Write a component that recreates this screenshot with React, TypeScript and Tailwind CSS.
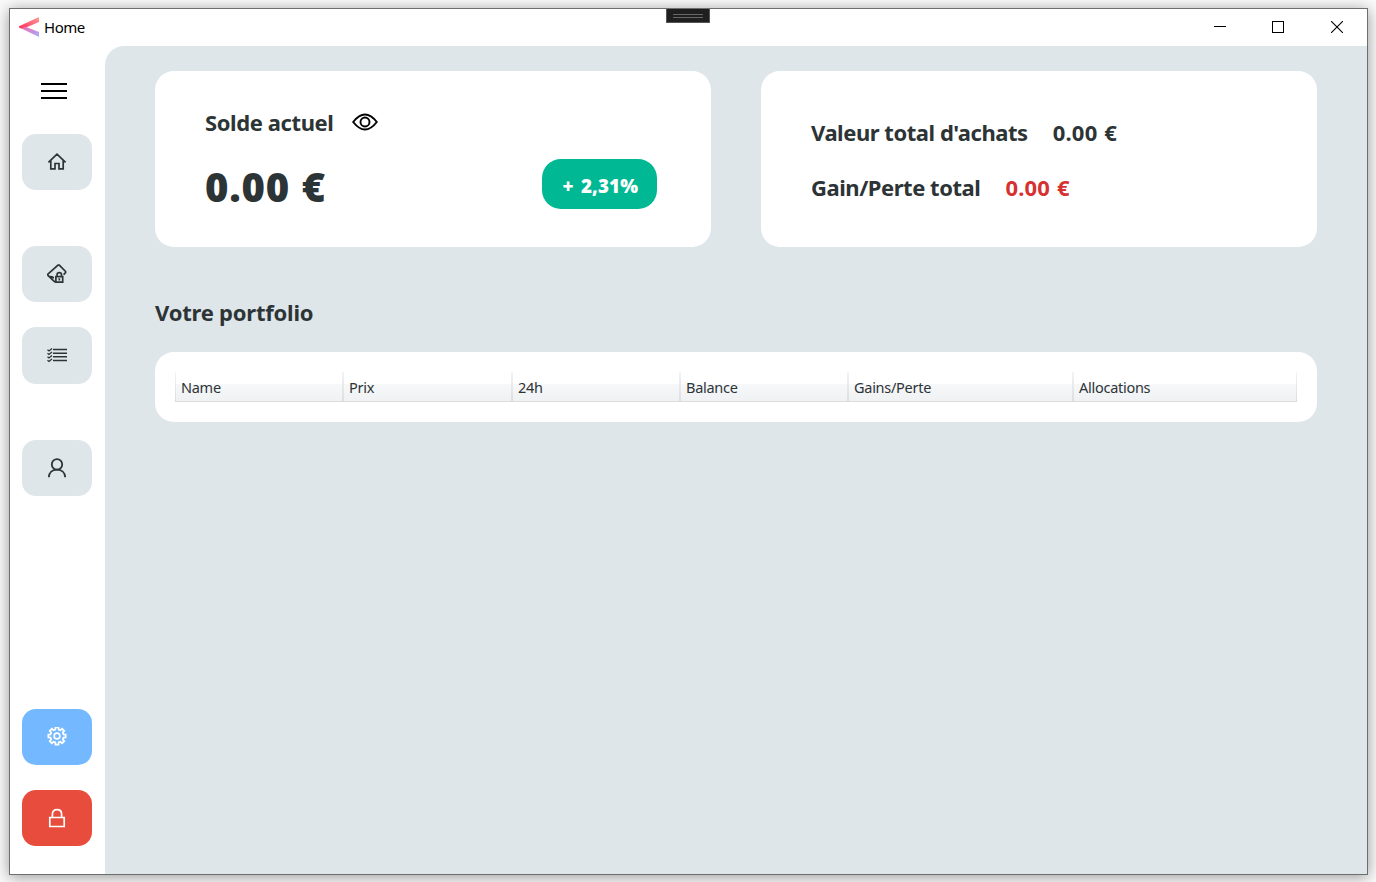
import type { ReactNode } from "react";

function Glyph({ children }: { children: ReactNode }) {
  return (
    <svg width="20" height="20" viewBox="0 0 20 20" fill="none" stroke="currentColor" strokeWidth="1.7">
      {children}
    </svg>
  );
}

function HomeIcon() {
  return (
    <Glyph>
      <path d="M1.4 10.3 10 2.2l8.600 8.100M3.800 8.500v8.300h4.200v-5.300h4v5.300h4.200V8.500" />
    </Glyph>
  );
}

function TagLockIcon() {
  return (
    <Glyph>
      <path d="M8 18.200.9 11.300v-1.200L11 1.200h1.300l6.300 6.300v1.200l-2 2M2.600 12.500l3.200.3M4.200 14.300l2.800-.9" />
      <path d="M8.900 12.700h6.800v5.500H8.900zM10.100 12.700v-2q0-2 2.200-2t2.200 2v2M12.300 14.200v2.400" />
    </Glyph>
  );
}

function ListIcon() {
  return (
    <Glyph>
      <path d="M6 4.500h14M6 8.200h14M6 11.800h14M6 15.500h14" strokeWidth="1.4" />
      <path d="m.5 4.700 1.500 1.300 3-2.600M.5 8.200 2 9.500l3-2.600M.5 11.700 2 13l3-2.600M.5 15.200 2 16.500l3-2.600" strokeWidth="1.3" />
    </Glyph>
  );
}

function UserIcon() {
  return (
    <Glyph>
      <circle cx="10" cy="6.4" r="5.2" strokeWidth="1.8" />
      <path d="M1.800 19.200c.2-4.700 3.700-7.600 8.200-7.600s8 2.900 8.200 7.600" strokeWidth="1.8" />
    </Glyph>
  );
}

function GearIcon() {
  return (
    <Glyph>
      <g transform="translate(0 -.7)">
        <path
          strokeWidth="1.8"
          d="m8.300 3.200.2-2.100h3l.2 2.100 1.700.7 1.700-1.400 2.100 2.100-1.400 1.700.7 1.700 2.100.2v3l-2.100.2-.7 1.700 1.400 1.700-2.100 2.100-1.700-1.400-1.700.7-.2 2.100h-3l-.2-2.100-1.700-.7-1.700 1.400-2.100-2.100 1.400-1.700-.7-1.700-2.100-.2v-3l2.100-.2.7-1.700-1.400-1.700 2.100-2.100 1.700 1.400z"
        />
        <circle cx="10" cy="9.700" r="2.900" strokeWidth="1.800" />
      </g>
    </Glyph>
  );
}

function LockIcon() {
  return (
    <Glyph>
      <path d="M2.800 9.500h14.400v9H2.800zM5.400 9.500V6.300q0-4.600 4.600-4.600t4.600 4.600v3.200" />
    </Glyph>
  );
}

function NavButton({ className, label, children }: { className: string; label: string; children: ReactNode }) {
  return (
    <button
      type="button"
      aria-label={label}
      className={`flex h-[56.25px] w-[70px] shrink-0 items-center justify-center rounded-[14px] ${className}`}
    >
      {children}
    </button>
  );
}

function TitleBar() {
  return (
    <header className="relative flex h-[37px] shrink-0 items-center bg-white pb-[2px]">
      <svg className="ml-[9px]" width="20" height="20" viewBox="0 0 20 20">
        <defs>
          <linearGradient id="top" x1="0" x2="1" y1="1" y2="0">
            <stop stopColor="#ff2d55" />
            <stop offset="1" stopColor="#ff9c9c" />
          </linearGradient>
          <linearGradient id="bottom" x1="0" x2="1" y1="0" y2="1">
            <stop stopColor="#f763a8" />
            <stop offset="1" stopColor="#9fb4ff" />
          </linearGradient>
        </defs>
        <path d="M0 9.200 20 0v5L7 10.500l-5 1-2-1z" fill="url(#top)" />
        <path d="M2 11.300l5-1.300L20 15v5z" fill="url(#bottom)" />
      </svg>
      <span className="ml-[5px] text-[15px] leading-5 tracking-[-0.45px] text-black">Home</span>
      <div className="absolute top-0 left-[656px] flex h-[14px] w-11 flex-col items-center justify-center gap-0.5 border border-t-0 border-[#555] bg-[#1f1f1f]">
        <i className="h-px w-[30px] bg-[#686868]" />
        <i className="h-px w-[30px] bg-[#686868]" />
      </div>
      <div className="mr-[24px] ml-auto flex items-center gap-[46px]">
        <svg width="12" height="12" viewBox="0 0 12 12" stroke="#000" shapeRendering="crispEdges">
          <path d="M0 5.5h12" />
        </svg>
        <svg width="12" height="12" viewBox="0 0 12 12" stroke="#000" fill="none" shapeRendering="crispEdges">
          <path d="M.5.5h11v11H.5z" />
        </svg>
        <svg className="ml-px" width="12" height="12" viewBox="0 0 12 12" stroke="#000" strokeWidth="1.1">
          <path d="m0 0 12 12M12 0 0 12" />
        </svg>
      </div>
    </header>
  );
}

function Sidebar() {
  return (
    <nav className="flex w-[95px] shrink-0 flex-col items-center pr-px text-[#2d3436]">
      <div className="mt-[37px] mr-[6px] flex w-[26px] flex-col gap-[5px]">
        <i className="h-0.5 bg-black" />
        <i className="h-0.5 bg-black" />
        <i className="h-0.5 bg-black" />
      </div>
      <NavButton label="Accueil" className="mt-[34.5px] bg-[#dfe6e9]">
        <HomeIcon />
      </NavButton>
      <NavButton label="Portefeuille" className="mt-[56.25px] bg-[#dfe6e9]">
        <TagLockIcon />
      </NavButton>
      <NavButton label="Liste" className="mt-[25px] bg-[#dfe6e9]">
        <ListIcon />
      </NavButton>
      <NavButton label="Profil" className="mt-[56.25px] bg-[#dfe6e9]">
        <UserIcon />
      </NavButton>
      <NavButton label="Paramètres" className="mt-auto bg-[#74b9ff] text-white">
        <GearIcon />
      </NavButton>
      <NavButton label="Verrouiller" className="mt-[25px] mb-[28px] bg-[#e74c3c] text-white">
        <LockIcon />
      </NavButton>
    </nav>
  );
}

const columns = ["Name", "Prix", "24h", "Balance", "Gains/Perte", "Allocations"];

export default function App() {
  return (
    <div className="h-[882px] w-[1376px] overflow-hidden bg-[#fafafa] pt-2 pl-[9px] font-['Noto_Sans','Open_Sans',sans-serif] text-[#2d3436]">
      <div className="flex h-[867px] w-[1359px] flex-col border border-[#6e6e6e] bg-white shadow-[0_2px_14px_rgba(0,0,0,0.4)]">
        <TitleBar />
        <div className="flex min-h-0 flex-1">
          <Sidebar />
          <main className="flex-1 rounded-tl-[19px] bg-[#dfe6e9] px-[50px] pt-[25px]">
            <div className="grid grid-cols-2 gap-[50px]">
              <section className="flex h-[176px] items-start justify-between rounded-[19px] bg-white pr-[54px] pl-[50px]">
                <div className="pt-[36px]">
                  <div className="flex items-center">
                    <h2 className="pb-px text-[22px] leading-[30px] font-bold tracking-[-0.4px]">Solde actuel</h2>
                    <svg className="mb-px ml-[18.5px]" width="27" height="18" viewBox="0 0 27 18" fill="none" stroke="#000" strokeWidth="1.9">
                      <path d="M1.200 9Q7 1.500 13 1.500T24.800 9Q19 16.500 13 16.500T1.200 9Z" />
                      <circle cx="13" cy="9" r="4.500" />
                    </svg>
                  </div>
                  <p className="mt-[22px] text-[40px] leading-[54px] font-black tracking-[0.8px] [word-spacing:0.5px]">0.00 €</p>
                </div>
                <div className="mt-[88px] flex h-[50px] w-[115.5px] items-center justify-center rounded-[19px] bg-[#00b894] pt-1 pl-[2px] text-[18.75px] font-black tracking-[0.1px] text-white [word-spacing:2.5px]">
                  <span>+ 2,31%</span>
                </div>
              </section>
              <section className="h-[176px] rounded-[19px] bg-white pt-[46px] pl-[50px] text-[22px] leading-[30px] font-bold">
                <div className="flex gap-[25px]">
                  <h2 className="tracking-[-0.46px]">Valeur total d&apos;achats</h2>
                  <p className="tracking-[0.2px] [word-spacing:1px]">0.00 €</p>
                </div>
                <div className="mt-[25px] flex gap-[25px]">
                  <h2 className="tracking-[-0.46px]">Gain/Perte total</h2>
                  <p className="tracking-[0.2px] text-[#d63031] [word-spacing:1px]">0.00 €</p>
                </div>
              </section>
            </div>
            <h2 className="mt-[50px] text-[22px] leading-[30px] font-bold tracking-[-0.22px]">Votre portfolio</h2>
            <section className="mt-[24.5px] h-[70px] rounded-[19px] bg-white px-5 pt-[20.5px]">
              <div className="grid h-[30px] grid-cols-[168px_169px_168px_168px_225px_224px] border-b border-[#dcdcde] bg-[linear-gradient(#fff_0,#fff_12px,#f7f8fa_12px,#f0f1f3_100%)]">
                {columns.map((column) => (
                  <div
                    key={column}
                    className="flex items-center border-x pl-[5px] text-[14.5px] leading-5 tracking-[-0.27px] [border-image:linear-gradient(#f4f4f5,#dcdde0)_1]"
                  >
                    <span>{column}</span>
                  </div>
                ))}
              </div>
            </section>
          </main>
        </div>
      </div>
    </div>
  );
}
